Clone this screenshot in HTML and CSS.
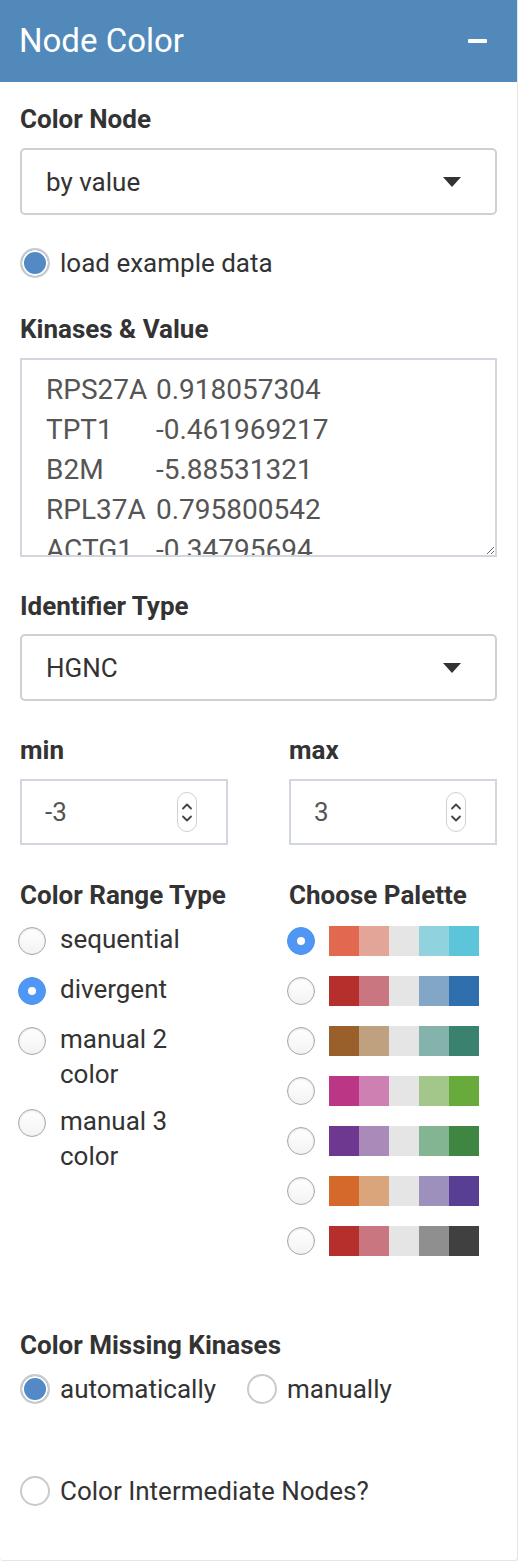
FILE: index.html
```html
<!DOCTYPE html>
<html>
<head>
<meta charset="utf-8">
<title>Node Color</title>
<link rel="stylesheet" href="styles.css">
</head>
<body>
<div class="box">
  <div class="box-header">
    <h3 class="box-title">Node Color</h3>
    <span class="collapse-btn"></span>
  </div>
  <div class="box-body">
    <div class="ctl-label m21">Color Node</div>
    <div class="select m13"><span>by value</span><span class="caret"></span></div>
    <div class="ra-row m32"><span class="ra checked"></span><span>load example data</span></div>

    <div class="ctl-label m34">Kinases &amp; Value</div>
    <textarea class="ta m13" spellcheck="false">RPS27A	0.918057304
TPT1	-0.461969217
B2M	-5.88531321
RPL37A	0.795800542
ACTG1	-0.34795694
RPL13A	0.3821</textarea>

    <div class="ctl-label m33">Identifier Type</div>
    <div class="select m12"><span>HGNC</span><span class="caret"></span></div>

    <div class="two-col m33">
      <div class="col">
        <div class="ctl-label">min</div>
        <div class="num m13"><span>-3</span>
          <svg class="spin" width="20" height="40" viewBox="0 0 20 40"><rect x="0.5" y="0.5" width="19" height="39" rx="9.5" fill="#fff" stroke="#d0d0d0"/><path d="M6 16.5 L10 12.5 L14 16.5" fill="none" stroke="#444" stroke-width="1.8" stroke-linecap="round" stroke-linejoin="round"/><path d="M6 24.5 L10 28.5 L14 24.5" fill="none" stroke="#444" stroke-width="1.8" stroke-linecap="round" stroke-linejoin="round"/></svg>
        </div>
      </div>
      <div class="col">
        <div class="ctl-label">max</div>
        <div class="num m13"><span>3</span>
          <svg class="spin" width="20" height="40" viewBox="0 0 20 40"><rect x="0.5" y="0.5" width="19" height="39" rx="9.5" fill="#fff" stroke="#d0d0d0"/><path d="M6 16.5 L10 12.5 L14 16.5" fill="none" stroke="#444" stroke-width="1.8" stroke-linecap="round" stroke-linejoin="round"/><path d="M6 24.5 L10 28.5 L14 24.5" fill="none" stroke="#444" stroke-width="1.8" stroke-linecap="round" stroke-linejoin="round"/></svg>
        </div>
      </div>
    </div>

    <div class="two-col m34">
      <div class="col">
        <div class="ctl-label">Color Range Type</div>
        <div class="nr-list">
          <div class="nr-item"><span class="nr"></span><span class="nr-text">sequential</span></div>
          <div class="nr-item"><span class="nr checked"></span><span class="nr-text">divergent</span></div>
          <div class="nr-item"><span class="nr"></span><span class="nr-text">manual 2 color</span></div>
          <div class="nr-item after-wrap"><span class="nr"></span><span class="nr-text">manual 3 color</span></div>
        </div>
      </div>
      <div class="col">
        <div class="ctl-label">Choose Palette</div>
        <div class="pal-list">
          <div class="pal-row"><span class="nr checked"></span><span class="sw">
            <i style="background:#e2694f"></i><i style="background:#e3a597"></i><i style="background:#e5e5e5"></i><i style="background:#90d3de"></i><i style="background:#5cc5da"></i></span></div>
          <div class="pal-row"><span class="nr"></span><span class="sw">
            <i style="background:#b5302d"></i><i style="background:#c97680"></i><i style="background:#e5e5e5"></i><i style="background:#82a6c6"></i><i style="background:#306fad"></i></span></div>
          <div class="pal-row"><span class="nr"></span><span class="sw">
            <i style="background:#9a602c"></i><i style="background:#bfa180"></i><i style="background:#e5e5e5"></i><i style="background:#83b3aa"></i><i style="background:#3b816f"></i></span></div>
          <div class="pal-row"><span class="nr"></span><span class="sw">
            <i style="background:#bb3786"></i><i style="background:#cf80b3"></i><i style="background:#e5e5e5"></i><i style="background:#a3c68b"></i><i style="background:#68aa3c"></i></span></div>
          <div class="pal-row"><span class="nr"></span><span class="sw">
            <i style="background:#6e3790"></i><i style="background:#a98ab9"></i><i style="background:#e5e5e5"></i><i style="background:#83b592"></i><i style="background:#3f8642"></i></span></div>
          <div class="pal-row"><span class="nr"></span><span class="sw">
            <i style="background:#d4692b"></i><i style="background:#dba57c"></i><i style="background:#e5e5e5"></i><i style="background:#9d90bd"></i><i style="background:#583f94"></i></span></div>
          <div class="pal-row"><span class="nr"></span><span class="sw">
            <i style="background:#b5302d"></i><i style="background:#c97680"></i><i style="background:#e5e5e5"></i><i style="background:#8f8f8f"></i><i style="background:#404040"></i></span></div>
        </div>
      </div>
    </div>

    <div class="ctl-label m73">Color Missing Kinases</div>
    <div class="inline-radios m12">
      <div class="ra-row"><span class="ra checked"></span><span>automatically</span></div>
      <div class="ra-row"><span class="ra"></span><span>manually</span></div>
    </div>

    <div class="ra-row m70"><span class="ra"></span><span>Color Intermediate Nodes?</span></div>
  </div>
</div>
</body>
</html>
```

FILE: styles.css
```css
* { box-sizing: border-box; }

body {
  margin: 0;
  background: #fff;
  font-family: Roboto, "Liberation Sans", Arial, sans-serif;
  color: #333;
}

.box {
  width: 518px;
  height: 1561px;
  border-right: 1px solid #e4e4e9;
  border-bottom: 1px solid #e4e4e9;
  border-bottom-left-radius: 3px;
  border-bottom-right-radius: 3px;
  background: #fff;
}

.box-header {
  height: 82px;
  background: #5289bb;
  display: flex;
  align-items: center;
  justify-content: space-between;
  padding: 0 30px 0 19px;
}

.box-title {
  margin: 0;
  font-size: 33px;
  font-weight: 400;
  line-height: 82px;
  color: #fff;
}

.collapse-btn {
  display: block;
  width: 19px;
  height: 4px;
  background: #fff;
  border-radius: 1px;
  margin-top: -1px;
}

.box-body {
  display: flex;
  flex-direction: column;
  padding: 0 20px;
}

.m10 { margin-top: 10px; }
.m12 { margin-top: 12px; }
.m13 { margin-top: 13px; }
.m21 { margin-top: 21px; }
.m32 { margin-top: 32px; }
.m33 { margin-top: 33px; }
.m34 { margin-top: 34px; }
.m70 { margin-top: 70px; }
.m73 { margin-top: 73px; }

.ctl-label {
  font-size: 26px;
  font-weight: 700;
  line-height: 32px;
  color: #333;
}

.select {
  height: 67px;
  border: 2px solid #d0d0d0;
  border-radius: 5px;
  display: flex;
  align-items: center;
  justify-content: space-between;
  padding: 0 34px 0 24px;
  font-size: 26px;
  color: #333;
}

.caret {
  width: 0;
  height: 0;
  border-left: 9.5px solid transparent;
  border-right: 9.5px solid transparent;
  border-top: 10px solid #333;
}

.ra-row {
  display: flex;
  align-items: center;
  gap: 10px;
  height: 32px;
  font-size: 26px;
  color: #333;
}

.ra {
  width: 30px;
  height: 30px;
  flex: none;
  border-radius: 50%;
  border: 2px solid #c9cacd;
  background: #fff;
}

.ra.checked {
  background: #5389c5;
  box-shadow: inset 0 0 0 2px #fff;
}

.inline-radios {
  display: flex;
  gap: 31px;
}

.ta {
  display: block;
  width: 100%;
  height: 199px;
  border: 2px solid #d2d6de;
  border-radius: 0;
  padding: 10px 20px 0 24px;
  font-family: Roboto, "Liberation Sans", Arial, sans-serif;
  font-size: 28px;
  line-height: 40px;
  color: #555;
  tab-size: 110px;
  -moz-tab-size: 110px;
  overflow: hidden;
  resize: vertical;
  outline: none;
  white-space: pre;
}

.two-col {
  display: grid;
  grid-template-columns: 208px 208px;
  column-gap: 61px;
}

.col {
  display: flex;
  flex-direction: column;
}

.num {
  height: 66px;
  border: 2px solid #d2d6de;
  display: flex;
  align-items: center;
  justify-content: space-between;
  padding: 0 29px 0 23px;
  font-size: 26px;
  color: #555;
}

.spin { display: block; }

.nr-list {
  display: flex;
  flex-direction: column;
  gap: 15px;
  margin-top: 11px;
}

.nr-item {
  display: flex;
  align-items: flex-start;
  gap: 14px;
  font-size: 26px;
  line-height: 35px;
}

.nr-item.after-wrap { margin-top: -3px; }

.nr-item .nr { margin-top: 5px; margin-left: -2px; }

.nr-text { width: 130px; }

.nr {
  width: 28px;
  height: 28px;
  flex: none;
  border-radius: 50%;
  border: 1px solid #a8a8a8;
  background: linear-gradient(#ffffff, #f3f3f3);
  box-shadow: inset 0 1px 2px rgba(0,0,0,0.12);
  position: relative;
}

.nr.checked {
  border-color: #4d93f2;
  background: #5096f4;
  box-shadow: none;
}

.nr.checked::after {
  content: "";
  position: absolute;
  left: 50%;
  top: 50%;
  width: 8px;
  height: 8px;
  margin: -4px 0 0 -4px;
  border-radius: 50%;
  background: #fff;
}

.pal-list {
  display: flex;
  flex-direction: column;
  gap: 20px;
  margin-top: 15px;
}

.pal-row {
  display: flex;
  align-items: center;
  gap: 14px;
  height: 30px;
  margin-left: -2px;
}

.sw {
  display: flex;
  height: 30px;
}

.sw i {
  display: block;
  width: 30px;
  height: 30px;
}
```
